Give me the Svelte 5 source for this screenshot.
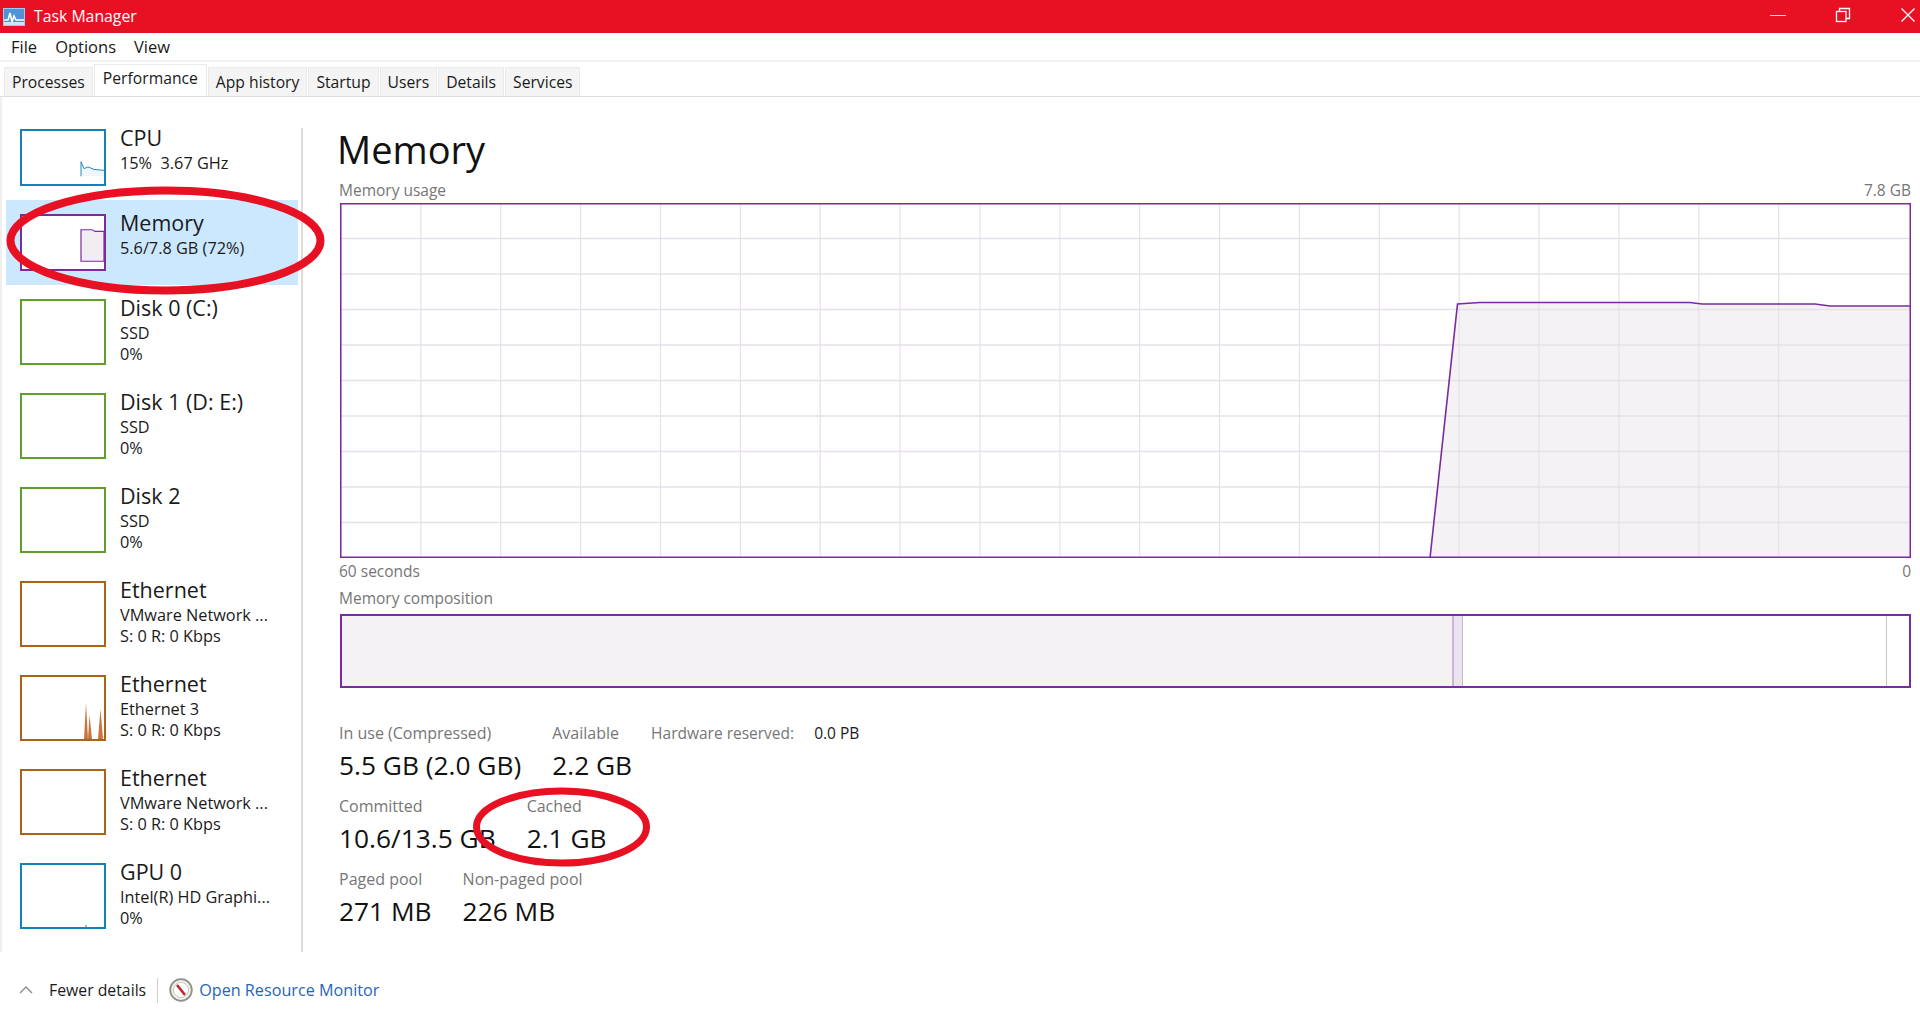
<script>
  const tabs = ['Processes', 'Performance', 'App history', 'Startup', 'Users', 'Details', 'Services'];
  const menu = ['File', 'Options', 'View'];

  const items = [
    { name: 'CPU', sub: ['15%  3.67 GHz'], color: '#1482b8', kind: 'cpu' },
    { name: 'Memory', sub: ['5.6/7.8 GB (72%)'], color: '#7b2b9e', kind: 'mem', active: true },
    { name: 'Disk 0 (C:)', sub: ['SSD', '0%'], color: '#5f9e2a' },
    { name: 'Disk 1 (D: E:)', sub: ['SSD', '0%'], color: '#5f9e2a' },
    { name: 'Disk 2', sub: ['SSD', '0%'], color: '#5f9e2a' },
    { name: 'Ethernet', sub: ['VMware Network ...', 'S: 0 R: 0 Kbps'], color: '#a8651a' },
    { name: 'Ethernet', sub: ['Ethernet 3', 'S: 0 R: 0 Kbps'], color: '#a8651a', kind: 'net' },
    { name: 'Ethernet', sub: ['VMware Network ...', 'S: 0 R: 0 Kbps'], color: '#a8651a' },
    { name: 'GPU 0', sub: ['Intel(R) HD Graphi...', '0%'], color: '#1482b8', kind: 'gpu' }
  ];

  // grid of the big chart, in chart pixels
  const vLines = Array.from({ length: 19 }, (_, i) => 1 + i * 79.87);
  const hLines = Array.from({ length: 9 }, (_, i) => 35.5 * (i + 1));
  const curve = '1090,355 1117.5,101 1140,99.5 1350,99.5 1362,101 1475,101 1490,103 1571,103';

  const statRows = [
    [{ label: 'In use (Compressed)', value: '5.5 GB (2.0 GB)' }, { label: 'Available', value: '2.2 GB' }],
    [{ label: 'Committed', value: '10.6/13.5 GB' }, { label: 'Cached', value: '2.1 GB' }],
    [{ label: 'Paged pool', value: '271 MB' }, { label: 'Non-paged pool', value: '226 MB' }]
  ];
</script>

<div class="window">
  <header class="titlebar">
    <svg class="appicon" viewBox="0 0 22 18" width="22" height="18">
      <rect width="22" height="18" fill="#9fc9ea" />
      <rect x="1" y="1" width="20" height="16" fill="#4d93d6" />
      <path d="M1 12h4l2-7 2 9 2-6 2 4h8" fill="none" stroke="#fff" stroke-width="1.6" />
      <rect x="1" y="14" width="20" height="3" fill="#cfe4f5" />
    </svg>
    <span class="title">Task Manager</span>
    <div class="controls">
      <svg viewBox="0 0 16 16" width="16" height="16"><path d="M0 8.5h16" stroke="#fbd5d8" stroke-width="1" /></svg>
      <svg viewBox="0 0 16 16" width="16" height="16" fill="none" stroke="#fff" stroke-width="1.3">
        <rect x="1.5" y="4.5" width="9.5" height="10" />
        <path d="M4.5 4V1.5H14.5V11.5H11" />
      </svg>
      <svg viewBox="0 0 16 16" width="16" height="16"><path d="M1.5 1.5l13 13M14.5 1.5l-13 13" stroke="#fff" stroke-width="1.3" /></svg>
    </div>
  </header>

  <nav class="menu">
    {#each menu as m}<span>{m}</span>{/each}
  </nav>

  <div class="tabs">
    {#each tabs as t}
      <div class="tab" class:current={t === 'Performance'}>{t}</div>
    {/each}
  </div>

  <div class="body">
    <aside class="sidebar">
      {#each items as item}
        <div class="item" class:active={item.active}>
          <div class="thumb" style="border-color: {item.color}">
            {#if item.kind}
              <svg viewBox="0 0 82 62" preserveAspectRatio="none">
                {#if item.kind === 'cpu'}
                  <path d="M59 53V36L62 44 66 42 72 45 82 46V53Z" fill="#eef6fa" />
                  <path d="M59 53V36L62 44 66 42 72 45 82 46" fill="none" stroke="#1482b8" stroke-width="1" />
                {:else if item.kind === 'mem'}
                  <path d="M59 53V16H70L73 18H82V53Z" fill="#f1eef2" stroke="#7b2b9e" stroke-width="1.2" />
                {:else if item.kind === 'net'}
                  <path d="M62 62L64 26 66 62ZM66 62L67.5 38 70 62ZM76 62L78.5 32 81 62Z" fill="#c8743a" />
                {:else if item.kind === 'gpu'}
                  <path d="M63 61h2" stroke="#1482b8" stroke-width="1" />
                {/if}
              </svg>
            {/if}
          </div>
          <div class="info">
            <div class="name">{item.name}</div>
            {#each item.sub as line}
              <div class="sub">{line}</div>
            {/each}
          </div>
        </div>
      {/each}
    </aside>

    <main class="main">
      <h1>Memory</h1>
      <div class="caption first"><span>Memory usage</span><span>7.8 GB</span></div>
      <svg class="chart" viewBox="0 0 1571 355" width="1571" height="355">
        <polygon points="{curve} 1571,355" fill="#f4f2f5" />
        {#each hLines as y}
          <path d="M0 {y}H1571" stroke="#e6e0e8" stroke-width="1.4" />
        {/each}
        {#each vLines as x}
          <path d="M{x} 0V355" stroke="#e6e0e8" stroke-width="1.2" />
        {/each}
        <polyline points={curve} fill="none" stroke="#7b2b9e" stroke-width="1.6" />
        <rect x="0.75" y="0.75" width="1569.5" height="353.5" fill="none" stroke="#7b2b9e" stroke-width="1.5" />
      </svg>
      <div class="caption under"><span>60 seconds</span><span>0</span></div>
      <div class="caption comp"><span>Memory composition</span></div>
      <div class="composition">
        <div class="seg used"></div>
        <div class="seg modified"></div>
        <div class="seg standby"></div>
        <div class="seg free"></div>
      </div>

      <div class="stats">
        {#each statRows as row, r}
          <div class="statrow">
            {#each row as s}
              <div class="stat">
                <div class="label">{s.label}</div>
                <div class="value">{s.value}</div>
              </div>
            {/each}
            {#if r === 0}
              <div class="hw">
                <span class="label">Hardware reserved:</span>
                <span class="hwvalue">0.0 PB</span>
              </div>
            {/if}
          </div>
        {/each}
      </div>
    </main>
  </div>

  <footer class="footer">
    <svg class="chevron" viewBox="0 0 14 8" width="14" height="8"><path d="M1 7l6-6 6 6" fill="none" stroke="#8a8a8a" stroke-width="1.4" /></svg>
    <span class="fewer">Fewer details</span>
    <span class="sep"></span>
    <svg class="monitor" viewBox="0 0 24 24" width="24" height="24">
      <circle cx="12" cy="12" r="10.8" fill="#f4f1ec" stroke="#8f8f88" stroke-width="1.8" />
      <circle cx="12" cy="12" r="7.6" fill="#fff" stroke="#c9c7c0" stroke-width="1" />
      <path d="M8 7l8 10" stroke="#c3242f" stroke-width="2.6" />
    </svg>
    <span class="link">Open Resource Monitor</span>
  </footer>

  <!-- hand-drawn annotations on top of the screenshot -->
  <svg class="marks" viewBox="0 0 1920 1022" width="1920" height="1022">
    <ellipse cx="165.5" cy="240.5" rx="155" ry="50" fill="none" stroke="#e81123" stroke-width="8" />
    <ellipse cx="561.5" cy="827" rx="85" ry="36" fill="none" stroke="#e81123" stroke-width="7" />
  </svg>
</div>

<style>
  :global(body) {
    margin: 0;
    background: #fff;
  }

  .window {
    position: relative;
    width: 1920px;
    height: 1022px;
    overflow: hidden;
    display: flex;
    flex-direction: column;
    font-family: "Open Sans", "Noto Sans", sans-serif;
    color: #1a1a1a;
    background: #fff;
  }

  .titlebar {
    height: 33px;
    flex: none;
    display: flex;
    align-items: center;
    background: #e81123;
    color: #fff;
    padding-left: 3px;
  }

  .title {
    margin-left: 9px;
    font-size: 15.8px;
    margin-top: -1px;
  }

  .controls {
    margin-left: auto;
    display: flex;
    gap: 49px;
    padding-right: 4px;
    margin-top: -3px;
  }

  .menu {
    height: 29px;
    flex: none;
    display: flex;
    align-items: center;
    gap: 18px;
    padding-left: 11px;
    padding-bottom: 1px;
    font-size: 16.5px;
    border-bottom: 2px solid #f0f0f0;
    box-sizing: border-box;
  }

  .tabs {
    height: 35px;
    flex: none;
    display: flex;
    align-items: flex-end;
    gap: 1px;
    padding-left: 4px;
    border-bottom: 1px solid #dedede;
    box-sizing: border-box;
    font-size: 15.7px;
  }

  .tab {
    height: 29px;
    line-height: 29px;
    padding: 0 7px;
    background: #f4f4f4;
    border: 1px solid #eaeaea;
    border-bottom: none;
    box-sizing: border-box;
  }

  .tab.current {
    height: 32px;
    line-height: 27px;
    padding: 0 8px;
    background: #fff;
  }

  .body {
    height: 855px;
    flex: none;
    display: flex;
    position: relative;
  }

  .body::after {
    content: '';
    position: absolute;
    left: 301px;
    top: 31px;
    bottom: 0;
    width: 2px;
    background: #dcdcdc;
  }

  .sidebar {
    width: 303px;
    flex: none;
    box-sizing: border-box;
    padding: 18px 5px 0 4px;
    border-left: 2px solid #efefef;
  }

  .item {
    display: flex;
    gap: 14px;
    padding: 14px 0 14px 14px;
    height: 94px;
    box-sizing: border-box;
  }

  .item:nth-child(-n + 2) {
    height: 85px;
  }

  .item.active {
    background: #cce8ff;
  }

  .thumb {
    width: 86px;
    height: 66px;
    flex: none;
    box-sizing: border-box;
    border: 2px solid;
    background: #fff;
  }

  .item:nth-child(-n + 2) .thumb {
    height: 57px;
  }

  .thumb svg {
    display: block;
    width: 100%;
    height: 100%;
  }

  .info {
    margin-top: -7px;
  }

  .name {
    font-size: 21.5px;
    line-height: 31px;
    white-space: nowrap;
  }

  .sub {
    font-size: 16.3px;
    line-height: 21px;
    white-space: pre;
  }

  .main {
    width: 1571px;
    margin-left: 37px;
    flex: none;
  }

  h1 {
    margin: 22px 0 0 -3px;
    font-size: 38px;
    line-height: 60px;
    height: 60px;
    font-weight: 400;
    color: #111;
  }

  .caption {
    display: flex;
    justify-content: space-between;
    font-size: 15.5px;
    line-height: 20px;
    height: 20px;
    color: #767676;
    margin-left: -1px;
  }

  .caption.first {
    margin-top: 1px;
  }

  .chart {
    display: block;
    margin-top: 3px;
  }

  .caption.under {
    margin-top: 3px;
  }

  .caption.comp {
    margin-top: 7px;
  }

  .composition {
    margin-top: 6px;
    height: 74px;
    box-sizing: border-box;
    border: 2px solid #7b2b9e;
    display: flex;
  }

  .seg {
    height: 100%;
    box-sizing: border-box;
  }

  .used {
    width: 1112px;
    background: #f4f2f5;
    border-right: 2px solid #c9b6d2;
  }

  .modified {
    width: 9px;
    background: #ece3f0;
    border-right: 1px solid #c9b6d2;
  }

  .standby {
    width: 424px;
    border-right: 1px solid #c9c4cc;
  }

  .free {
    flex: 1;
  }

  .stats {
    margin-top: 35px;
    margin-left: -1px;
    display: flex;
    flex-direction: column;
    gap: 11px;
  }

  .statrow {
    display: flex;
    gap: 31px;
    height: 62px;
  }

  .label {
    font-size: 16px;
    line-height: 20px;
    color: #767676;
    white-space: nowrap;
  }

  .value {
    font-size: 26.3px;
    line-height: 38px;
    margin-top: 3px;
    color: #111;
    white-space: nowrap;
  }

  .hw {
    display: flex;
    gap: 20px;
    align-items: center;
    height: 20px;
    margin-left: -12px;
  }

  .hw .label {
    font-size: 15.5px;
  }

  .hwvalue {
    font-size: 15.5px;
    color: #1a1a1a;
  }

  .footer {
    display: flex;
    align-items: center;
    height: 70px;
    padding-left: 19px;
    padding-top: 6px;
    box-sizing: border-box;
    font-size: 15.8px;
  }

  .fewer {
    margin-left: 16px;
  }

  .sep {
    width: 1px;
    height: 25px;
    margin: 0 11px;
    background: #d0d0d0;
  }

  .link {
    margin-left: 6px;
    color: #1f66b8;
    font-size: 16.2px;
  }

  .marks {
    position: absolute;
    left: 0;
    top: 0;
    pointer-events: none;
  }
</style>
